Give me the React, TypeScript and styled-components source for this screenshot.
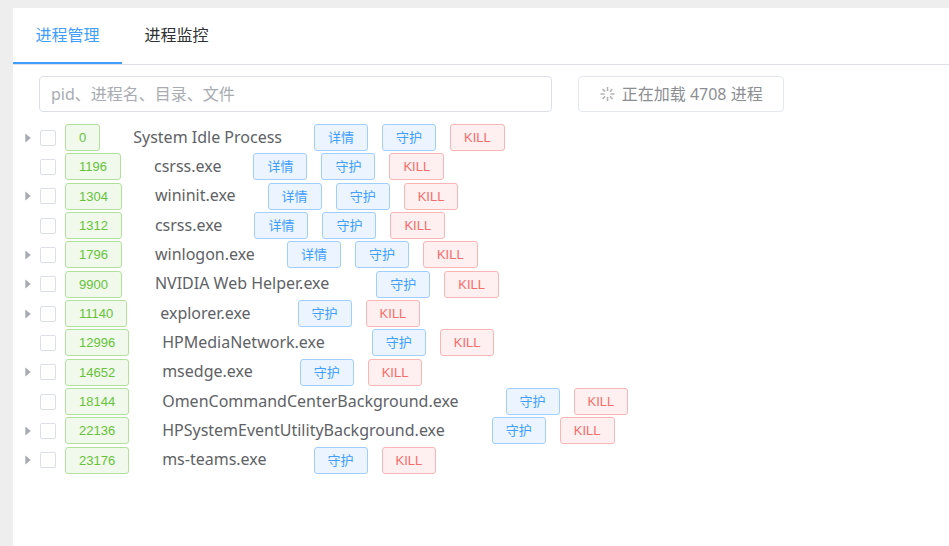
import React, { useState } from "react";
import styled, { createGlobalStyle } from "styled-components";

const GlobalStyle = createGlobalStyle`
  * { box-sizing: border-box; }
  body {
    margin: 0;
    background: #eeeeee;
    color: #606266;
    font: 16px/24px "Noto Sans", "Noto Sans CJK SC", sans-serif;
  }
  button, input { font: inherit; }
`;

const Shell = styled.div`
  padding: 8px 0 0 13px;
`;

const Panel = styled.main`
  min-height: calc(100vh - 8px);
  background: #ffffff;
`;

const TabBar = styled.nav`
  display: flex;
  height: 57px;
  border-bottom: 1px solid #dcdfe6;
`;

const Tab = styled.button<{ $active: boolean }>`
  width: 109px;
  padding: 0;
  border: 0;
  border-bottom: 2px solid ${(p) => (p.$active ? "#409eff" : "transparent")};
  background: none;
  color: ${(p) => (p.$active ? "#409eff" : "#303133")};
  cursor: pointer;
`;

const Toolbar = styled.div`
  display: flex;
  gap: 26px;
  padding: 11px 26px;
`;

const SearchInput = styled.input`
  flex: 0 1 58%;
  min-width: 0;
  height: 36px;
  padding: 0 11px;
  border: 1px solid #dcdfe6;
  border-radius: 4px;
  background: #ffffff;
  color: #606266;
  outline: none;
  &::placeholder { color: #a8abb2; opacity: 1; }
`;

const LoadButton = styled.button`
  display: flex;
  align-items: center;
  justify-content: center;
  gap: 7px;
  flex: none;
  height: 36px;
  padding: 0 20px;
  border: 1px solid #e4e7ed;
  border-radius: 4px;
  background: #ffffff;
  color: #8c8e92;
  white-space: nowrap;
`;

const Tree = styled.ul`
  display: grid;
  grid-auto-rows: 1fr;
  min-height: 352px;
  margin: 0;
  padding: 0;
  list-style: none;
`;

const Row = styled.li`
  display: flex;
  align-items: center;
  padding-left: 9px;
  white-space: nowrap;
`;

const Expander = styled.button<{ $leaf: boolean }>`
  display: flex;
  align-items: center;
  justify-content: center;
  flex: none;
  width: 18px;
  height: 20px;
  padding: 0 6px 0 0;
  border: 0;
  background: none;
  color: #a8abb2;
  visibility: ${(p) => (p.$leaf ? "hidden" : "visible")};
`;

const Check = styled.input`
  appearance: none;
  flex: none;
  width: 16px;
  height: 16px;
  margin: 0 9px 0 0;
  border: 1px solid #dcdfe6;
  border-radius: 2px;
  background: #ffffff;
  &:checked { background: #409eff; border-color: #409eff; }
`;

const Pid = styled.span`
  height: 27px;
  padding: 0 13px;
  border: 1px solid #b3e19d;
  border-radius: 3px;
  background: #f0f9eb;
  color: #67c23a;
  font: 13px/25px "Liberation Sans", sans-serif;
`;

const Name = styled.label<{ $wide: boolean }>`
  margin: 0 ${(p) => (p.$wide ? "47px" : "32px")} 0 33px;
  padding-bottom: 2px;
`;

const Actions = styled.div`
  display: flex;
  gap: 14px;
`;

const Action = styled.button<{ $danger?: boolean }>`
  height: 27px;
  padding: 0 13px;
  border: 1px solid ${(p) => (p.$danger ? "#fab6b6" : "#a0cfff")};
  border-radius: 3px;
  background: ${(p) => (p.$danger ? "#fef0f0" : "#ecf5ff")};
  color: ${(p) => (p.$danger ? "#f56c6c" : "#409eff")};
  font: 13px/25px "Liberation Sans", "Noto Sans CJK SC", sans-serif;
  cursor: pointer;
`;

function Spinner() {
  return (
    <svg width="16" height="16" viewBox="0 0 16 16" fill="none" stroke="#b4b4b4" strokeWidth="1.6" aria-hidden="true">
      <path d="M8.5 1v4M8.5 11v4M1.5 8h4M11.5 8h4M3.5 3l2.6 2.6M10.9 10.4l2.6 2.6M3.5 13l2.6-2.6M10.9 5.6l2.6-2.6" />
    </svg>
  );
}

function Caret() {
  return (
    <svg width="6" height="10" viewBox="0 0 6 10" fill="currentColor" aria-hidden="true">
      <path d="M0.3 0.5L5.8 5L0.3 9.5Z" />
    </svg>
  );
}

interface Process {
  pid: number;
  name: string;
  leaf?: boolean;
  details?: boolean;
}

const processes: Process[] = [
  { pid: 0, name: "System Idle Process", details: true },
  { pid: 1196, name: "csrss.exe", leaf: true, details: true },
  { pid: 1304, name: "wininit.exe", details: true },
  { pid: 1312, name: "csrss.exe", leaf: true, details: true },
  { pid: 1796, name: "winlogon.exe", details: true },
  { pid: 9900, name: "NVIDIA Web Helper.exe" },
  { pid: 11140, name: "explorer.exe" },
  { pid: 12996, name: "HPMediaNetwork.exe", leaf: true },
  { pid: 14652, name: "msedge.exe" },
  { pid: 18144, name: "OmenCommandCenterBackground.exe", leaf: true },
  { pid: 22136, name: "HPSystemEventUtilityBackground.exe" },
  { pid: 23176, name: "ms-teams.exe" },
];

const tabs = ["进程管理", "进程监控"];

export default function App() {
  const [active, setActive] = useState(0);
  return (
    <Shell>
      <GlobalStyle />
      <Panel>
        <TabBar>
          {tabs.map((tab, i) => (
            <Tab key={tab} $active={i === active} onClick={() => setActive(i)}>
              {tab}
            </Tab>
          ))}
        </TabBar>
        <Toolbar>
          <SearchInput placeholder="pid、进程名、目录、文件" aria-label="pid、进程名、目录、文件" />
          <LoadButton>
            <Spinner />
            正在加载 4708 进程
          </LoadButton>
        </Toolbar>
        <Tree>
          {processes.map((p) => (
            <Row key={p.pid}>
              <Expander $leaf={!!p.leaf} aria-label={p.name}>
                <Caret />
              </Expander>
              <Check type="checkbox" id={`process-${p.pid}`} />
              <Pid>{p.pid}</Pid>
              <Name htmlFor={`process-${p.pid}`} $wide={!p.details}>
                {p.name}
              </Name>
              <Actions>
                {p.details && <Action>详情</Action>}
                <Action>守护</Action>
                <Action $danger>KILL</Action>
              </Actions>
            </Row>
          ))}
        </Tree>
      </Panel>
    </Shell>
  );
}
